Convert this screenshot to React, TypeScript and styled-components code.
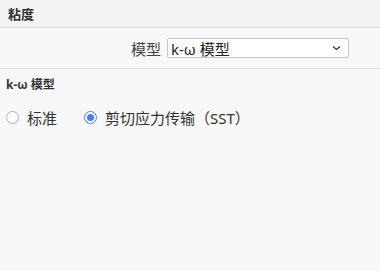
import React from "react";
import styled, { createGlobalStyle } from "styled-components";

const Global = createGlobalStyle`
  html, body { margin: 0; padding: 0; background: #f8f8f8; }
  body { font-family: "Noto Sans", "Noto Sans CJK SC", sans-serif; }
`;

const Page = styled.div`
  width: 380px;
  height: 271px;
  background: #f8f8f8;
  display: flex;
  flex-direction: column;
`;

const Header = styled.div`
  height: 27px;
  background: #f3f3f3;
  border-bottom: 1px solid #dcdcdc;
  display: flex;
  align-items: center;
  padding-left: 8px;
  font-size: 13px;
  font-weight: 700;
  color: #333;
`;

const FieldRow = styled.div`
  height: 40px;
  border-bottom: 1px solid #dcdcdc;
  display: flex;
  align-items: center;
  justify-content: flex-end;
  padding-right: 31px;
  gap: 6px;
`;

const Label = styled.span`
  font-size: 15px;
  color: #444;
`;

const Select = styled.div`
  width: 182px;
  height: 20px;
  box-sizing: border-box;
  background: #fff;
  border: 1px solid #c4c4cc;
  border-radius: 2px;
  display: flex;
  align-items: center;
  justify-content: space-between;
  padding: 0 7px 0 3px;
  font-size: 15px;
  color: #222;
`;

const Section = styled.div`
  padding: 7px 6px 0 6px;
  display: flex;
  flex-direction: column;
`;

const SectionTitle = styled.div`
  font-size: 12px;
  font-weight: 700;
  color: #333;
  height: 16px;
  display: flex;
  align-items: center;
`;

const RadioRow = styled.div`
  margin-top: 15px;
  display: flex;
  align-items: center;
  gap: 27px;
`;

const RadioItem = styled.label`
  display: flex;
  align-items: center;
  gap: 8px;
  font-size: 15px;
  color: #333;
`;

const Circle = styled.span<{ $on?: boolean }>`
  width: 13px;
  height: 13px;
  box-sizing: border-box;
  border-radius: 50%;
  border: 1px solid ${(p) => (p.$on ? "#4a7cf0" : "#b0b0b8")};
  background: #fff;
  display: flex;
  align-items: center;
  justify-content: center;
  &::after {
    content: "";
    width: 7px;
    height: 7px;
    border-radius: 50%;
    background: ${(p) => (p.$on ? "#4a7cf0" : "transparent")};
  }
`;

export default function App() {
  return (
    <>
      <Global />
      <Page>
        <Header>粘度</Header>
        <FieldRow>
          <Label>模型</Label>
          <Select>
            <span>k-ω 模型</span>
            <svg width="9" height="6" viewBox="0 0 9 6">
              <path d="M1 1.5 L4.5 4.5 L8 1.5" stroke="#333" strokeWidth="1.3" fill="none" />
            </svg>
          </Select>
        </FieldRow>
        <Section>
          <SectionTitle>k-ω 模型</SectionTitle>
          <RadioRow>
            <RadioItem>
              <Circle />
              标准
            </RadioItem>
            <RadioItem>
              <Circle $on />
              剪切应力传输（SST）
            </RadioItem>
          </RadioRow>
        </Section>
      </Page>
    </>
  );
}
